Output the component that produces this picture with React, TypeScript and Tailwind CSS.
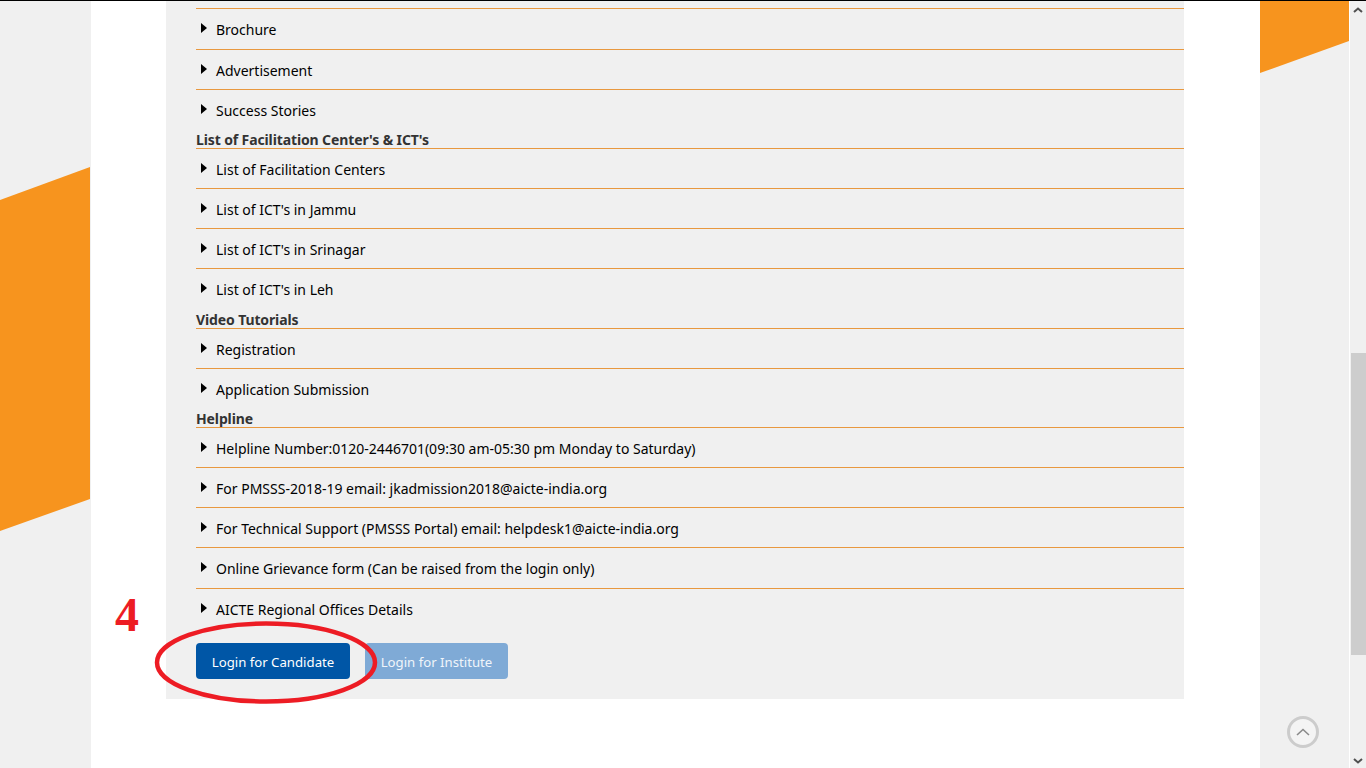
const font = { fontFamily: '"Noto Sans", sans-serif' };

type Item = { text: string; cls: string; heading?: boolean };

const items: Item[] = [
  { text: "Brochure", cls: "h-[41px] border-b pb-[1px]" },
  { text: "Advertisement", cls: "h-10 border-b" },
  { text: "Success Stories", cls: "h-10" },
  { text: "List of Facilitation Center's & ICT's", cls: "h-[19px] border-b", heading: true },
  { text: "List of Facilitation Centers", cls: "h-10 border-b" },
  { text: "List of ICT's in Jammu", cls: "h-10 border-b" },
  { text: "List of ICT's in Srinagar", cls: "h-10 border-b" },
  { text: "List of ICT's in Leh", cls: "h-10" },
  { text: "Video Tutorials", cls: "h-5 border-b", heading: true },
  { text: "Registration", cls: "h-10 border-b" },
  { text: "Application Submission", cls: "h-10" },
  { text: "Helpline", cls: "h-[19px] border-b", heading: true },
  { text: "Helpline Number:0120-2446701(09:30 am-05:30 pm Monday to Saturday)", cls: "h-10 border-b" },
  { text: "For PMSSS-2018-19 email: jkadmission2018@aicte-india.org", cls: "h-10 border-b" },
  { text: "For Technical Support (PMSSS Portal) email: helpdesk1@aicte-india.org", cls: "h-10 border-b" },
  { text: "Online Grievance form (Can be raised from the login only)", cls: "h-[41px] border-b" },
  { text: "AICTE Regional Offices Details", cls: "h-[41px] pb-[1px]" },
];

function Row({ item }: { item: Item }) {
  if (item.heading) {
    return (
      <div className={`flex items-end border-[#e8983f] text-[14px] font-bold leading-[16px] tracking-[-0.12px] text-[#333] ${item.cls}`}>
        {item.text}
      </div>
    );
  }
  return (
    <div className={`flex items-center border-[#e8983f] pl-[5px] text-[14px] text-black ${item.cls}`}>
      <svg width="6" height="10" viewBox="0 0 6 10" className="mr-[9px] -mt-[2px] shrink-0">
        <path d="M0 0 L6 5 L0 10 Z" fill="#000" />
      </svg>
      <span className="mt-[1px]">{item.text}</span>
    </div>
  );
}

export default function App() {
  return (
    <div className="relative flex h-[768px] w-[1366px] flex-col overflow-hidden bg-white" style={font}>
      <div className="h-px shrink-0 bg-black" />
      <div className="flex min-h-0 flex-1">
        {/* left gutter */}
        <div className="w-[91px] shrink-0 bg-[#f0f0f0] pt-[166px]">
          <svg width="90" height="365" viewBox="0 0 90 365">
            <path d="M0 33 L90 0 L90 332 L0 364 Z" fill="#f7941e" />
          </svg>
        </div>

        {/* page */}
        <div className="w-[1169px] shrink-0 pl-[75px]">
          <div className="h-[698px] w-[1018px] bg-[#f0f0f0] pl-[30px]">
            <div className="h-2 border-b border-[#e8983f]" />
            {items.map((item) => (
              <Row key={item.text} item={item} />
            ))}
            <div className="mt-[13px] flex gap-[15px]">
              <button className="h-9 w-[154px] rounded-[4px] bg-[#0056a6] pt-[4px] text-[13.2px] text-white">
                Login for Candidate
              </button>
              <button className="h-9 w-[143px] rounded-[4px] bg-[#7faad6] pt-[4px] text-[13.2px] text-[#f0f5fa]">
                Login for Institute
              </button>
            </div>
          </div>
        </div>

        {/* right gutter */}
        <div className="flex w-[89px] shrink-0 flex-col justify-between bg-[#f0f0f0] pb-[20px]">
          <svg width="89" height="72" viewBox="0 0 89 72">
            <path d="M0 0 L89 0 L89 40 L0 72 Z" fill="#f7941e" />
          </svg>
          <div className="ml-[27px] flex h-8 w-8 items-center justify-center rounded-full border-[3px] border-[#cccccc] bg-[#f4f4f4]">
            <svg width="14" height="8" viewBox="0 0 14 8" fill="none">
              <path d="M1 7 L7 1.5 L13 7" stroke="#8a8a8a" strokeWidth="1.6" />
            </svg>
          </div>
        </div>

        {/* scrollbar */}
        <div className="ml-px flex w-4 shrink-0 flex-col items-center bg-[#f0f0f0]">
          <svg width="10" height="6" viewBox="0 0 10 6" fill="none" className="mt-[6px]">
            <path d="M1 5 L5 1.5 L9 5" stroke="#505050" strokeWidth="2" />
          </svg>
          <div className="mt-[340px] h-[302px] w-[15px] bg-[#cdcdcd]" />
          <svg width="10" height="6" viewBox="0 0 10 6" fill="none" className="mt-[103px]">
            <path d="M1 1 L5 4.5 L9 1" stroke="#505050" strokeWidth="2" />
          </svg>
        </div>
      </div>

      {/* annotation drawn over the page */}
      <span
        className="absolute left-[115px] top-[586px] text-[48px] font-bold leading-[58px] text-[#ed1c24]"
        style={{ fontFamily: '"Liberation Serif", serif' }}
      >
        4
      </span>
      <svg width="230" height="90" viewBox="0 0 230 90" className="absolute left-[152px] top-[618px]" fill="none">
        <ellipse cx="114" cy="44.5" rx="109" ry="39" stroke="#ed1c24" strokeWidth="4.5" />
      </svg>
    </div>
  );
}
